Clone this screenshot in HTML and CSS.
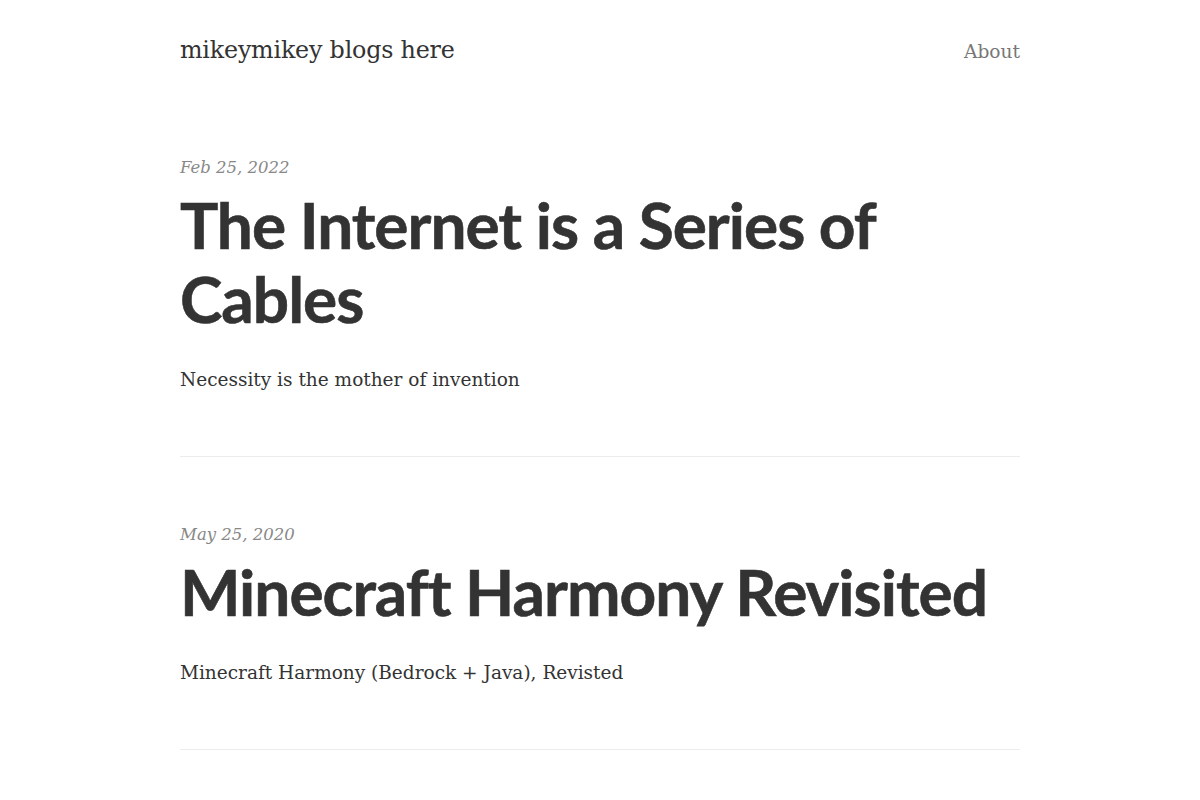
FILE: index.html
```html
<!DOCTYPE html>
<html lang="en">
<head>
<meta charset="utf-8">
<title>mikeymikey blogs here</title>
<link rel="stylesheet" href="styles.css">
</head>
<body>
<div class="wrap">
  <header class="site-header">
    <a class="site-title" href="#">mikeymikey blogs here</a>
    <nav class="site-nav"><a href="#">About</a></nav>
  </header>
  <main class="posts">
    <article class="post">
      <p class="post-date">Feb 25, 2022</p>
      <h2 class="post-title">The Internet is a Series of Cables</h2>
      <p class="post-excerpt">Necessity is the mother of invention</p>
    </article>
    <article class="post">
      <p class="post-date">May 25, 2020</p>
      <h2 class="post-title">Minecraft Harmony Revisited</h2>
      <p class="post-excerpt">Minecraft Harmony (Bedrock + Java), Revisted</p>
    </article>
  </main>
</div>
</body>
</html>
```
FILE: styles.css
```css
html, body {
  margin: 0;
  padding: 0;
  background: #fff;
}

body {
  font-family: "DejaVu Serif", "Liberation Serif", serif;
  color: #333;
}

a {
  color: inherit;
  text-decoration: none;
}

.wrap {
  width: 840px;
  margin: 0 auto;
}

.site-header {
  display: flex;
  justify-content: space-between;
  align-items: baseline;
  padding-top: 36px;
  height: 90px;
  box-sizing: border-box;
}

.site-title {
  font-size: 23.8px;
  font-weight: 300;
  color: #333;
  letter-spacing: -0.2px;
}

.site-nav a {
  font-size: 18.6px;
  color: #777;
}

.posts {
  padding-top: 62px;
}

.post {
  border-bottom: 1px solid #ececec;
  padding-bottom: 61px;
  margin-bottom: 62px;
}

.post-date {
  margin: 0;
  font-size: 16.5px;
  font-style: italic;
  color: #888;
  line-height: 26px;
  padding-top: 3px;
}

.post-title {
  margin: 0;
  font-family: "Lato", "Noto Sans", sans-serif;
  font-weight: 700;
  font-size: 64px;
  line-height: 74px;
  letter-spacing: -1px;
  color: #333;
  -webkit-text-stroke: 0.6px #333;
  padding-top: 7px;
}

.post-excerpt {
  margin: 29px 0 0;
  font-size: 18.5px;
  line-height: 30px;
  color: #333;
}
```
